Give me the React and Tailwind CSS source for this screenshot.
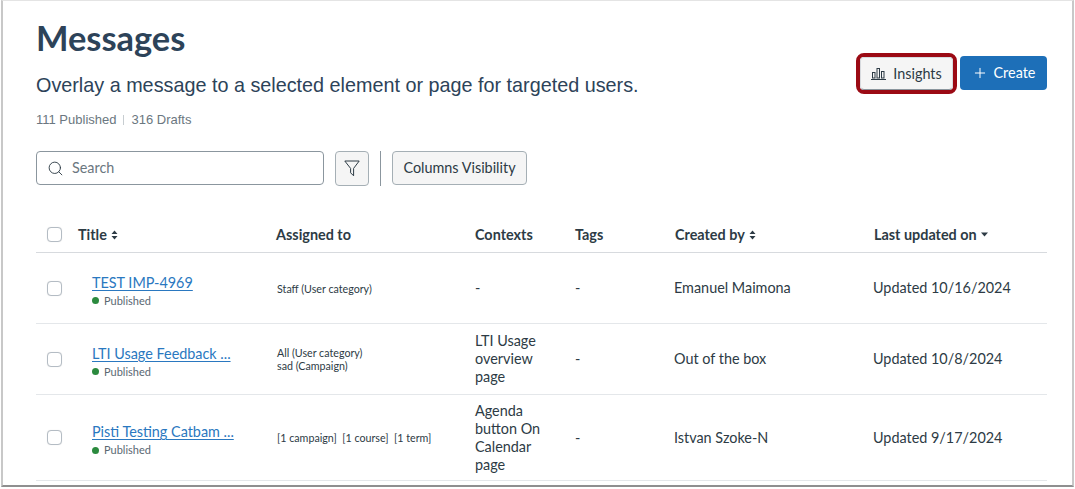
import { Search, Plus } from 'lucide-react';

const lato = 'font-[Lato,sans-serif]';

function Checkbox() {
  return <span className="block w-[15px] h-[15px] rounded-[4px] border border-[#b4bcc4] bg-white shadow-[0_0_1px_rgba(0,0,0,0.15)]" />;
}

function SortIcon() {
  return (
    <svg width="7" height="10" viewBox="0 0 7 10" className="ml-[4px] mt-[1px]">
      <path d="M3.5 0.5 L6.5 4 L0.5 4 Z M3.5 9.5 L6.5 6 L0.5 6 Z" fill="#2d3b45" />
    </svg>
  );
}

function InsightsIcon() {
  return (
    <svg width="15" height="14" viewBox="0 0 15 14" fill="none" stroke="#2d3b45" strokeWidth="1">
      <rect x="1.5" y="5.5" width="2.5" height="5.5" />
      <rect x="6" y="1.5" width="2.5" height="9.5" />
      <rect x="10.5" y="4.5" width="2.5" height="6.5" />
      <path d="M0 12.5 H15" />
    </svg>
  );
}

function FilterIcon() {
  return (
    <svg width="16" height="17" viewBox="0 0 16 17" fill="none" stroke="#2d3b45" strokeWidth="1">
      <path d="M0.8 1 H15.2 L9.6 8.4 V15.8 L6.6 12.8 V8.4 Z" strokeLinejoin="round" />
    </svg>
  );
}

const cols = 'grid grid-cols-[42px_198px_199px_100px_100px_199px_1fr] items-center';

const rows = [
  {
    height: 'h-[71px]',
    title: 'TEST IMP-4969',
    assigned: ['Staff (User category)'],
    contexts: ['-'],
    creator: 'Emanuel Maimona',
    updated: 'Updated 10/16/2024',
  },
  {
    height: 'h-[71px]',
    title: 'LTI Usage Feedback ...',
    assigned: ['All (User category)', 'sad (Campaign)'],
    contexts: ['LTI Usage', 'overview', 'page'],
    creator: 'Out of the box',
    updated: 'Updated 10/8/2024',
  },
  {
    height: 'h-[86px]',
    title: 'Pisti Testing Catbam ...',
    assigned: ['[1 campaign]\u00a0 [1 course]\u00a0 [1 term]'],
    contexts: ['Agenda', 'button On', 'Calendar', 'page'],
    creator: 'Istvan Szoke-N',
    updated: 'Updated 9/17/2024',
  },
];

function Row({ row }) {
  return (
    <div className={`${cols} ${row.height} border-b border-[#e4e7ea] text-[14.4px] text-[#2d3b45]`}>
      <div className="pl-[11px]"><Checkbox /></div>
      <div className="pl-[14px] pt-[5px]">
        <a className="block text-[14.4px] leading-[20px] text-[#2a78c0] underline underline-offset-2">{row.title}</a>
        <div className="flex items-center text-[11px] leading-[16px] text-[#5a6872]">
          <span className="w-[7px] h-[7px] rounded-full bg-[#2b8a3e] mr-[5px]" />
          Published
        </div>
      </div>
      <div className="text-[10.7px] leading-[13px] pl-px">
        {row.assigned.map((line) => <div key={line}>{line}</div>)}
      </div>
      <div className="leading-[18px]">
        {row.contexts.map((line) => <div key={line}>{line}</div>)}
      </div>
      <div>-</div>
      <div className="-ml-px">{row.creator}</div>
      <div className="-ml-px">{row.updated}</div>
    </div>
  );
}

export default function App() {
  return (
    <div className={`w-[1075px] h-[489px] bg-white overflow-hidden ${lato}`}>
      <div className="w-[1073px] h-[487px] ml-[1px] border-l-2 border-r-2 border-t border-b-2 border-l-[#c8c8c8] border-r-[#c8c8c8] border-t-[#e4e4e4] border-b-[#8f8f8f] pl-[33px] pr-[25px] pt-[18px]">
        <div className="flex justify-between items-start">
          <div>
            <h1 className="text-[34.4px] leading-[40px] font-bold text-[#2d4359] -mt-px">Messages</h1>
            <p className="mt-[15px] text-[19.8px] leading-[24px] text-[#2d4359] font-['Liberation_Sans',sans-serif]">
              Overlay a message to a selected element or page for targeted users.
            </p>
            <div className="mt-[15px] flex items-center text-[13px] leading-[16px] text-[#6b7780] font-['Liberation_Sans',sans-serif]">
              111 Published
              <span className="w-px h-[10px] bg-[#c7cdd1] mx-[7px]" />
              316 Drafts
            </div>
          </div>
          <div className="flex items-start gap-[3px] mt-[34px]">
            <div className="rounded-[8px] border-4 border-[#9b0a14] w-[101px] h-[41px]">
              <button className="flex items-center h-full w-full justify-center gap-[7px] rounded-[4px] bg-[#f5f5f5] border border-[#d7dade] border-b-[#8b969e] text-[14.4px] text-[#2d3b45]">
                <InsightsIcon />
                Insights
              </button>
            </div>
            <button className="flex items-center justify-center gap-[6px] mt-[3px] h-[34px] w-[87px] rounded-[4px] bg-[#1d6fb8] text-[14.4px] text-white">
              <Plus size={16} strokeWidth={1.5} />
              Create
            </button>
          </div>
        </div>

        <div className="flex items-start mt-[23px]">
          <div className="flex items-center w-[288px] h-[34px] rounded-[4px] border border-[#8b969e] px-[10px] text-[14.4px] text-[#6b7780]">
            <Search size={17} strokeWidth={1.3} className="text-[#2d3b45] mr-[8px]" />
            Search
          </div>
          <button className="ml-[11px] flex items-center justify-center w-[34px] h-[35px] rounded-[4px] border border-[#a5afb5] bg-[#f5f5f5]">
            <FilterIcon />
          </button>
          <span className="ml-[11px] w-px h-[35px] bg-[#8b969e]" />
          <button className="ml-[11px] h-[34px] w-[135px] rounded-[4px] border border-[#a5afb5] bg-[#f5f5f5] text-[14.4px] text-[#2d3b45]">
            Columns Visibility
          </button>
        </div>

        <div className="mt-[31px]">
          <div className={`${cols} h-[36px] border-b border-[#d7dade] text-[14.4px] font-bold text-[#2d3b45]`}>
            <div className="pl-[11px]"><Checkbox /></div>
            <div className="flex items-center">Title<SortIcon /></div>
            <div>Assigned to</div>
            <div>Contexts</div>
            <div>Tags</div>
            <div className="flex items-center">Created by<SortIcon /></div>
            <div className="flex items-center">
              Last updated on
              <svg width="7" height="5" viewBox="0 0 7 5" className="ml-[4px]"><path d="M0 0.5 H7 L3.5 4.5 Z" fill="#2d3b45" /></svg>
            </div>
          </div>
          {rows.map((row) => <Row key={row.title} row={row} />)}
        </div>
      </div>
    </div>
  );
}
